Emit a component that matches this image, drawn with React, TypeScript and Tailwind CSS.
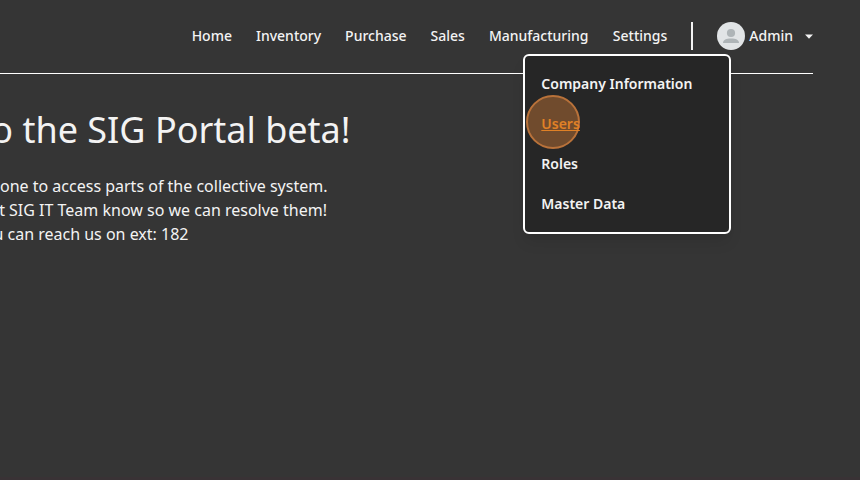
const links = ["Home", "Inventory", "Purchase", "Sales", "Manufacturing"];

function SettingsMenu() {
  return (
    <div className="absolute left-[-89.5px] top-8 z-10 flex h-[180px] w-[208px] flex-col rounded-md border-2 border-white bg-[#262626] px-4 py-2 text-sm font-semibold shadow-lg">
      <a className="flex h-10 items-center whitespace-nowrap">Company Information</a>
      <a className="relative flex h-10 items-center">
        <span className="absolute left-[-15px] top-[-9.5px] size-[54px] rounded-full border-2 border-[#b9723a] bg-[#704b2d]" />
        <span className="relative text-[#e08126] underline">Users</span>
      </a>
      <a className="flex h-10 items-center">Roles</a>
      <a className="flex h-10 items-center">Master Data</a>
    </div>
  );
}

function Avatar() {
  return (
    <svg className="size-7" viewBox="0 0 28 28">
      <circle cx="14" cy="14" r="14" fill="#e1e4e6" />
      <circle cx="14" cy="11" r="4.1" fill="#aeb4b7" />
      <path d="M6 21c0-3.2 3.2-4.6 8-4.6s8 1.400 8 4.600z" fill="#aeb4b7" />
    </svg>
  );
}

export default function App() {
  return (
    <div className="flex h-[480px] w-[860px] flex-col overflow-hidden bg-[#353535] font-['Noto_Sans',sans-serif] text-[#f3f3f3]">
      <header className="mr-[47px] flex h-[74px] justify-end border-b border-white pt-[22px]">
        <nav className="flex h-7 items-center gap-6 text-sm font-medium">
          <div className="-mr-[0.5px] flex gap-6">
            {links.map((l) => (
              <a key={l}>{l}</a>
            ))}
          </div>
          <div className="relative ml-[0.8px] flex h-7 items-center">
            <a>Settings</a>
            <SettingsMenu />
          </div>
          <div className="h-7 w-0.5 bg-[#f3f3f3]" />
          <div className="flex items-center">
            <Avatar />
            <span className="ml-1">Admin</span>
            <svg className="ml-3 h-[5px] w-2" viewBox="0 0 8 5">
              <path d="M0 0.5h8L4 4.700z" fill="#f3f3f3" />
            </svg>
          </div>
        </nav>
      </header>
      <main className="flex grow flex-col whitespace-nowrap pt-9">
        <h1 className="flex w-[350.5px] justify-end text-4xl leading-10">o the SIG Portal beta!</h1>
        <div className="mt-6 text-base leading-6">
          <p className="flex w-[327.5px] justify-end">one to access parts of the collective system.</p>
          <p className="flex w-[327px] justify-end">t SIG IT Team know so we can resolve them!</p>
          <p className="flex w-[188.5px] justify-end">u can reach us on ext: 182</p>
        </div>
      </main>
      <div className="h-[3px] bg-[#393235]" />
    </div>
  );
}
